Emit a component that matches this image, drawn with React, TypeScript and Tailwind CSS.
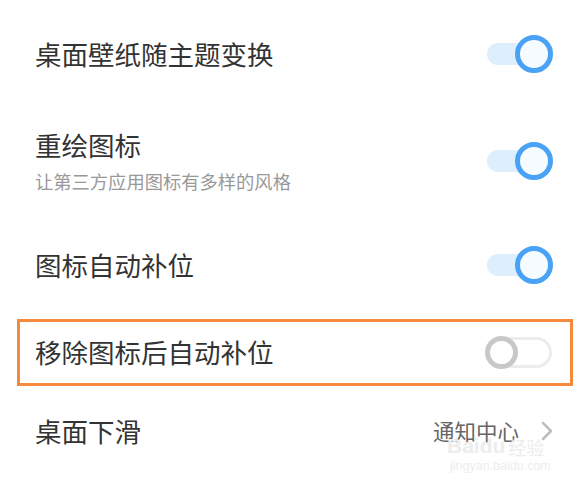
import React from "react";

const font = { fontFamily: '"Noto Sans CJK SC", "Noto Sans", sans-serif' };

function ToggleOn() {
  return (
    <div className="relative w-[66px] h-[40px] shrink-0">
      <div className="absolute left-0 top-[9px] w-[58px] h-[22px] rounded-full bg-[#ddeefd]" />
      <div className="absolute right-0 top-[1px] w-[38px] h-[38px] rounded-full border-[5px] border-[#49a2f4] bg-[#f6fbff]" />
    </div>
  );
}

function ToggleOff() {
  return (
    <div className="relative w-[67px] h-[33px] shrink-0">
      <div className="absolute left-[2px] right-0 top-[1px] bottom-[1px] rounded-full border-[3px] border-[#ececec] bg-white" />
      <div className="absolute left-0 top-0 w-[33px] h-[33px] rounded-full border-[5px] border-[#c8c8c8] bg-white" />
    </div>
  );
}

export default function App() {
  return (
    <div className="w-[584px] h-[481px] bg-white overflow-hidden flex flex-col" style={font}>
      <div className="h-[108px] flex items-center justify-between pl-[35px] pr-[31px]">
        <span className="text-[26.5px] leading-none text-[#333]">桌面壁纸随主题变换</span>
        <ToggleOn />
      </div>
      <div className="h-[106px] flex items-center justify-between pl-[35px] pr-[31px]">
        <div className="flex flex-col">
          <span className="text-[26.5px] leading-none text-[#333]">重绘图标</span>
          <span className="text-[18.3px] leading-none text-[#999] mt-[13px]">让第三方应用图标有多样的风格</span>
        </div>
        <ToggleOn />
      </div>
      <div className="h-[102px] flex items-center justify-between pl-[35px] pr-[31px]">
        <span className="text-[26.5px] leading-none text-[#333]">图标自动补位</span>
        <ToggleOn />
      </div>
      <div className="mt-[3px] ml-[17px] mr-[11px] h-[67px] border-[3px] border-[#f58a3c] flex items-center justify-between pl-[15px] pr-[18px]">
        <span className="text-[26.5px] leading-none text-[#333]">移除图标后自动补位</span>
        <ToggleOff />
      </div>
      <div className="relative h-[90px] flex items-center justify-between pl-[35px] pr-[31px]">
        <span className="text-[26.5px] leading-none text-[#333]">桌面下滑</span>
        <div className="flex items-center gap-[22px]">
          <span className="text-[21.5px] leading-none text-[#666]">通知中心</span>
          <svg width="12" height="20" viewBox="0 0 12 20" fill="none">
            <path d="M2 2 L10 10 L2 18" stroke="#bdbdbd" strokeWidth="2.5" strokeLinecap="round" strokeLinejoin="round" />
          </svg>
        </div>
        <div className="absolute left-[447px] top-[49px] flex flex-col items-start pointer-events-none">
          <div className="flex items-end">
            <span className="text-[21px] leading-none font-bold text-[#ededed]" style={{ fontFamily: '"Liberation Sans", sans-serif' }}>Baidu</span>
            <span className="text-[18px] leading-none text-[#ededed] ml-[3px]">经验</span>
          </div>
          <span className="text-[12.5px] leading-none text-[#ededed] mt-[4px] ml-[3px]" style={{ fontFamily: '"Liberation Sans", sans-serif' }}>jingyan.baidu.com</span>
        </div>
      </div>
    </div>
  );
}
